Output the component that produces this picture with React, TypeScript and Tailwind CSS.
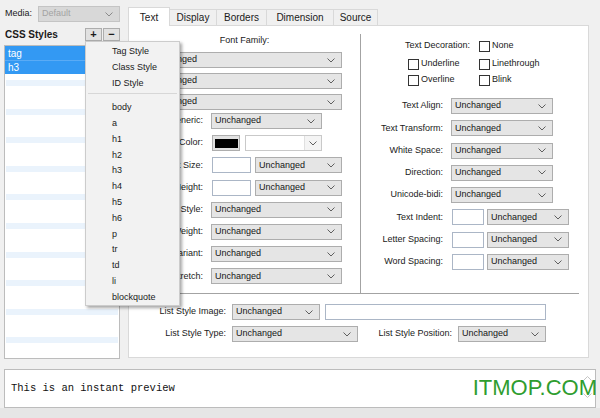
import type { ReactNode } from "react";

// ===============================================
// SMALL CONTROLS
// ===============================================

function Chevron({ color = "#5f5f5f" }: { color?: string }) {
  return (
    <svg width="8" height="5" viewBox="0 0 8 5" className="shrink-0">
      <path d="M0.5 0.5 L4 4 L7.5 0.5" fill="none" stroke={color} strokeWidth="1" />
    </svg>
  );
}

function Select({ className, value = "Unchanged" }: { className: string; value?: string }) {
  return (
    <div
      className={`flex h-[16px] items-center justify-between border border-[#adadad] bg-[#e5e5e5] pl-[3px] pr-[6px] text-[#151515] ${className}`}
    >
      <span>{value}</span>
      <Chevron />
    </div>
  );
}

function TextBox({ className }: { className: string }) {
  return <div className={`h-[16px] border border-[#abb6c6] bg-white ${className}`} />;
}

function Checkbox({ label }: { label: string }) {
  return (
    <div className="flex items-center">
      <span className="h-[11px] w-[11px] border border-[#333] bg-white" />
      <span className="ml-[2px]">{label}</span>
    </div>
  );
}

function LeftRow({ label, children, first }: { label: string; children: ReactNode; first?: boolean }) {
  return (
    <div className={`flex h-[16px] items-center ${first ? "mt-[3px]" : "mt-[6.2px]"}`}>
      <span className="w-[74px] text-right">{label}</span>
      <div className="ml-[8px] flex items-center">{children}</div>
    </div>
  );
}

function RightRow({ label, children, first }: { label: string; children: ReactNode; first?: boolean }) {
  return (
    <div className={`flex h-[16px] items-center ${first ? "mt-[10px]" : "mt-[6.3px]"}`}>
      <span className="w-[82px] text-right">{label}</span>
      <div className="ml-[8px] flex items-center">{children}</div>
    </div>
  );
}

// ===============================================
// DATA
// ===============================================

const tabs = [
  { name: "Text", w: "w-[42px]" },
  { name: "Display", w: "w-[48px]" },
  { name: "Borders", w: "w-[51px]" },
  { name: "Dimension", w: "w-[68px]" },
  { name: "Source", w: "w-[45px]" },
];

const tagItems = ["body", "a", "h1", "h2", "h3", "h4", "h5", "h6", "p", "tr", "td", "li", "blockquote"];

// ===============================================
// APP
// ===============================================

export default function App() {
  return (
    <div className="relative h-[418px] w-[600px] overflow-hidden bg-[#f0f0f0] font-['Liberation_Sans',Arial,sans-serif] text-[9px] text-[#1a1a1a]">
      <div className="flex h-[360px]">
        {/* LEFT COLUMN */}
        <div className="w-[128px] pl-[4px] pt-[6px]">
          <div className="flex h-[16px] items-center">
            <span className="w-[34px] pl-[1px]">Media:</span>
            <div className="flex h-[16px] w-[82px] items-center justify-between border border-[#c4c4c4] bg-[#d8d8d8] pl-[3px] pr-[6px] text-[#a3a3a3]">
              <span>Default</span>
              <Chevron color="#8a8a8a" />
            </div>
          </div>

          <div className="mt-[5px] flex h-[14px] w-[116px] items-center justify-between">
            <span className="pl-[1px] text-[10px] font-bold">CSS Styles</span>
            <div className="flex gap-[1px]">
              <div className="flex h-[13px] w-[17px] items-center justify-center border border-[#adadad] bg-[#e1e1e1] text-[11px] font-bold leading-none">
                +
              </div>
              <div className="flex h-[13px] w-[17px] items-center justify-center border border-[#adadad] bg-[#e1e1e1] text-[11px] font-bold leading-none">
                −
              </div>
            </div>
          </div>

          <div className="mt-[4px] h-[314px] w-[116px] overflow-hidden border border-[#bcbcbc] bg-white">
            <div className="flex h-[14px] items-center bg-[#3399f3] pl-[3px] text-[10px] text-white">tag</div>
            <div className="flex h-[14px] items-center border-t border-[#5aabf5] bg-[#3399f3] pl-[3px] text-[10px] text-white">
              h3
            </div>
            <div className="h-[6px]" />
            {Array.from({ length: 10 }).map((_, i) => (
              <div key={i} className="h-[28.6px]">
                <div className="mx-[1px] h-[6px] bg-[#eaf3fc]" />
              </div>
            ))}
          </div>
        </div>

        {/* TAB PANEL */}
        <div className="w-[461px]">
          <div className="flex h-[25px] items-end">
            {tabs.map((tab, i) =>
              i === 0 ? (
                <div
                  key={tab.name}
                  className={`relative z-10 -mb-px flex h-[19px] items-center justify-center border border-b-0 border-[#d9d9d9] bg-white text-[10px] ${tab.w}`}
                >
                  {tab.name}
                </div>
              ) : (
                <div
                  key={tab.name}
                  className={`-ml-px flex h-[16px] items-center justify-center border border-b-0 border-[#d9d9d9] bg-[#f0f0f0] text-[10px] ${tab.w}`}
                >
                  {tab.name}
                </div>
              ),
            )}
          </div>

          <div className="h-[333px] border border-[#d9d9d9] bg-white">
            <div className="flex pt-[8px]">
              {/* FONT SECTION */}
              <div className="h-[259px] w-[232px] border-r border-[#a3a3a3]">
                <div className="flex h-[14px] items-center justify-center">Font Family:</div>
                <Select className="ml-[18px] mt-[4px] w-[195px]" />
                <Select className="ml-[18px] mt-[5px] w-[195px]" />
                <Select className="ml-[18px] mt-[5px] w-[195px]" />

                <LeftRow label="Generic:" first>
                  <Select className="w-[111px]" />
                </LeftRow>
                <LeftRow label="Color:">
                  <div className="ml-[1px] flex h-[16px] w-[28px] items-center justify-center border border-[#adadad] bg-[#e1e1e1]">
                    <div className="h-[9px] w-[23px] bg-black" />
                  </div>
                  <div className="ml-[5px] flex h-[16px] w-[77px] border border-[#c9c9c9] bg-white">
                    <div className="flex-1" />
                    <div className="flex w-[17px] items-center justify-center border-l border-[#e0e0e0] bg-[#f4f4f4]">
                      <Chevron />
                    </div>
                  </div>
                </LeftRow>
                <LeftRow label="Font Size:">
                  <TextBox className="ml-[1px] w-[39px]" />
                  <Select className="ml-[4px] w-[87px]" />
                </LeftRow>
                <LeftRow label="Line Height:">
                  <TextBox className="ml-[1px] w-[39px]" />
                  <Select className="ml-[4px] w-[87px]" />
                </LeftRow>
                <LeftRow label="Font Style:">
                  <Select className="w-[131px]" />
                </LeftRow>
                <LeftRow label="Font Weight:">
                  <Select className="w-[131px]" />
                </LeftRow>
                <LeftRow label="Font Variant:">
                  <Select className="w-[131px]" />
                </LeftRow>
                <LeftRow label="Font Stretch:">
                  <Select className="w-[131px]" />
                </LeftRow>
              </div>

              {/* TEXT SECTION */}
              <div className="flex-1 pt-[4px]">
                <div className="flex h-[16px] items-center">
                  <span className="w-[109px] text-right">Text Decoration:</span>
                  <div className="ml-[9px]">
                    <Checkbox label="None" />
                  </div>
                </div>
                <div className="mt-[2px] flex h-[16px] items-center pl-[47px]">
                  <div className="w-[71px]">
                    <Checkbox label="Underline" />
                  </div>
                  <Checkbox label="Linethrough" />
                </div>
                <div className="flex h-[16px] items-center pl-[47px]">
                  <div className="w-[71px]">
                    <Checkbox label="Overline" />
                  </div>
                  <Checkbox label="Blink" />
                </div>

                <RightRow label="Text Align:" first>
                  <Select className="w-[102px]" />
                </RightRow>
                <RightRow label="Text Transform:">
                  <Select className="w-[102px]" />
                </RightRow>
                <RightRow label="White Space:">
                  <Select className="w-[102px]" />
                </RightRow>
                <RightRow label="Direction:">
                  <Select className="w-[102px]" />
                </RightRow>
                <RightRow label="Unicode-bidi:">
                  <Select className="w-[102px]" />
                </RightRow>
                <RightRow label="Text Indent:">
                  <TextBox className="ml-[1px] w-[32px]" />
                  <Select className="ml-[3px] w-[82px]" />
                </RightRow>
                <RightRow label="Letter Spacing:">
                  <TextBox className="ml-[1px] w-[32px]" />
                  <Select className="ml-[3px] w-[82px]" />
                </RightRow>
                <RightRow label="Word Spacing:">
                  <TextBox className="ml-[1px] w-[32px]" />
                  <Select className="ml-[3px] w-[82px]" />
                </RightRow>
              </div>
            </div>

            {/* LIST SECTION */}
            <div className="ml-[8px] mr-[9px] h-px bg-[#a3a3a3]" />
            <div className="mt-[10px] flex h-[16px] items-center">
              <span className="w-[97px] text-right">List Style Image:</span>
              <Select className="ml-[6px] w-[88px]" />
              <TextBox className="ml-[5px] w-[221px]" />
            </div>
            <div className="mt-[6px] flex h-[16px] items-center">
              <span className="w-[97px] text-right">List Style Type:</span>
              <Select className="ml-[6px] w-[126px]" />
              <span className="w-[94px] text-right">List Style Position:</span>
              <Select className="ml-[6px] w-[88px]" />
            </div>
          </div>
        </div>
      </div>

      {/* PREVIEW */}
      <div className="relative mx-[4px] mt-[9px] flex h-[39px] items-center border border-[#bcbcbc] bg-white pl-[6px] font-['Liberation_Mono',monospace] text-[10.5px] text-[#111]">
        This is an instant preview
        <div className="absolute right-[3px] top-[6px] flex flex-col gap-[12px]">
          <svg width="9" height="5" viewBox="0 0 9 5">
            <path d="M0.5 4.5 L4.5 0.5 L8.5 4.5" fill="none" stroke="#c4c4c4" strokeWidth="1" />
          </svg>
          <svg width="9" height="5" viewBox="0 0 9 5">
            <path d="M0.5 0.5 L4.5 4.5 L8.5 0.5" fill="none" stroke="#c4c4c4" strokeWidth="1" />
          </svg>
        </div>
      </div>
      <div className="h-[10px] bg-[#e6e6e6]" />

      {/* CONTEXT MENU */}
      <div className="absolute left-[85px] top-[41px] h-[265px] w-[95px] border border-[#cccccc] bg-[#f2f2f2] pt-[2px] shadow-[2px_2px_3px_rgba(0,0,0,0.35)]">
        {["Tag Style", "Class Style", "ID Style"].map((item) => (
          <div key={item} className="flex h-[16px] items-center pl-[26px]">
            {item}
          </div>
        ))}
        <div className="mx-[2px] mb-[6px] mt-[1px] h-px bg-[#d7d7d7]" />
        {tagItems.map((item) => (
          <div key={item} className="flex h-[15.8px] items-center pl-[26px]">
            {item}
          </div>
        ))}
      </div>

      {/* WATERMARK */}
      <div className="absolute right-[3px] top-[377px] font-['Liberation_Sans',Arial,sans-serif] text-[22px] leading-none text-[#2f9d2f]">
        ITMOP.COM
      </div>
    </div>
  );
}
